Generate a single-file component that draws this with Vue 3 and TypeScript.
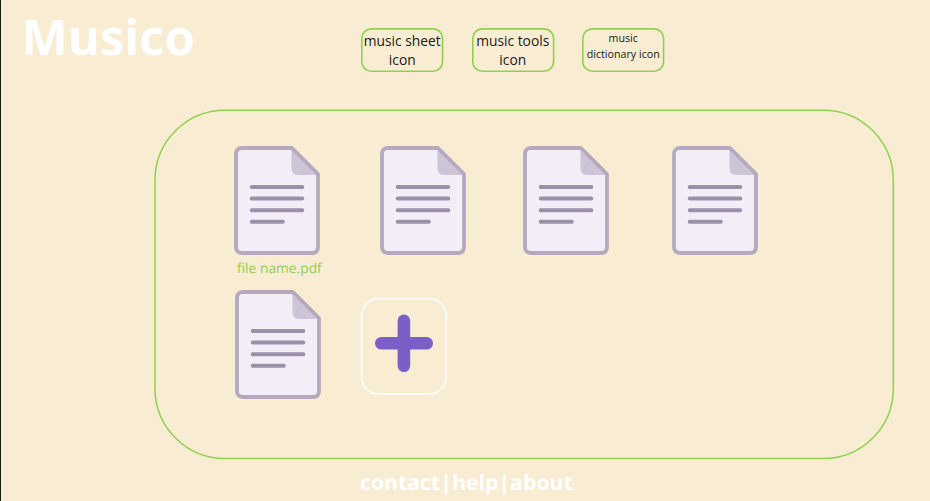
<script setup lang="ts">
interface NavItem {
  lines: string[]
  small?: boolean
}

interface SheetFile {
  slot: string
  name?: string
}

const navItems: NavItem[] = [
  { lines: ['music sheet', 'icon'] },
  { lines: ['music tools', 'icon'] },
  { lines: ['music', 'dictionary icon'], small: true },
]

const files: SheetFile[] = [
  { slot: 'first', name: 'file name.pdf' },
  { slot: 'second' },
  { slot: 'third' },
  { slot: 'fourth' },
  { slot: 'fifth' },
]
</script>

<template>
  <div class="page">
    <header class="header">
      <h1 class="brand">Musico</h1>
      <nav class="nav">
        <button v-for="item in navItems" :key="item.lines[1] + item.lines[0]" class="nav-item" :class="{ small: item.small }">
          <svg class="frame" viewBox="0 0 83 44" aria-hidden="true">
            <rect x="0.8" y="0.9" width="80.8" height="42.3" rx="9.5" fill="none" stroke="#8fd14f" stroke-width="1.6" />
          </svg>
          <span v-for="line in item.lines" :key="line" class="nav-line">{{ line }}</span>
        </button>
      </nav>
    </header>

    <main class="panel">
      <svg class="frame" viewBox="0 0 741 351" aria-hidden="true">
        <rect x="1" y="1.2" width="738.3" height="348.3" rx="70" fill="none" stroke="#8fd14f" stroke-width="1.5" />
      </svg>
      <div class="files">
        <figure v-for="file in files" :key="file.slot" class="file" :class="file.slot">
          <svg class="doc" width="86" height="109" viewBox="0 0 86 109" aria-hidden="true">
            <path d="M8 2H58L84 28V101Q84 107 78 107H8Q2 107 2 101V8Q2 2 8 2Z" fill="#f3edf8" />
            <path d="M57.5 2L84 29H64Q57.5 29 57.5 22.5Z" fill="#cdc4d6" />
            <path d="M8 2H58L84 28V101Q84 107 78 107H8Q2 107 2 101V8Q2 2 8 2Z" fill="none" stroke="#b4a9be" stroke-width="3.8" stroke-linejoin="round" />
            <path d="M17.7 41H68.3M17.7 52.6H68.3M17.7 64.2H68.3M17.7 75.8H48.8" fill="none" stroke="#9b8fa9" stroke-width="4" stroke-linecap="round" />
          </svg>
          <figcaption v-if="file.name" class="file-name">{{ file.name }}</figcaption>
        </figure>
        <button class="add" aria-label="Add file">
          <svg width="87" height="98" viewBox="0 0 87 98" aria-hidden="true">
            <rect x="1.6" y="1.6" width="84.6" height="95.4" rx="17" fill="none" stroke="#fff" stroke-width="1.6" />
            <path d="M43.9 23.7V68.7M21.3 46.2H66.7" stroke="#7b5fc7" stroke-width="12.6" stroke-linecap="round" />
          </svg>
        </button>
      </div>
    </main>

    <footer class="footer">contact|help|about</footer>
  </div>
</template>

<style>
body {
  margin: 0;
  background: #f8ecd2;
}
</style>

<style scoped>
.page {
  box-sizing: border-box;
  width: 930px;
  height: 501px;
  overflow: hidden;
  border-left: 1px solid #1a1a1a;
  background: #f8ecd2;
  font-family: "Open Sans", "Noto Sans", sans-serif;
  text-rendering: geometricPrecision;
}

.header {
  display: flex;
  height: 109px;
}

.brand {
  box-sizing: border-box;
  width: 360px;
  margin: 0;
  padding: 3px 0 0 20.5px;
  color: #fff;
  font-size: 49px;
  font-weight: 700;
  line-height: 68px;
}

.nav {
  display: flex;
  gap: 27.5px;
  padding-top: 28px;
}

button {
  padding: 0;
  border: 0;
  background: none;
  font: inherit;
}

.nav-item {
  position: relative;
  display: flex;
  flex-direction: column;
  align-items: center;
  box-sizing: border-box;
  width: 83px;
  height: 44px;
  padding: 3px 0.5px 0 0;
  color: #1a1a1a;
  font-size: 13.8px;
  line-height: 19px;
  white-space: nowrap;
}

.nav-item.small {
  font-size: 10.7px;
  line-height: 15.5px;
}

.frame {
  position: absolute;
  inset: 0;
  width: 100%;
  height: 100%;
}

.panel {
  position: relative;
  width: 741px;
  height: 351px;
  margin-left: 152.5px;
}

.files {
  display: grid;
  grid-template-columns: 146px 143px 149px 86px;
  grid-template-rows: 144px 110px;
  padding: 37px 0 0 80.5px;
}

.file {
  margin: 0;
}

.file.fifth {
  padding-left: 1px;
}

.doc,
.add svg {
  display: block;
}

.file-name {
  margin-top: 4px;
  padding-left: 3px;
  color: #8fd14f;
  font-size: 13.8px;
  line-height: 19px;
  white-space: nowrap;
}

.add {
  width: 87px;
  height: 98px;
  margin: 7px 0 0 -20px;
}

.footer {
  padding-left: 359px;
  color: #fff;
  font-size: 21.25px;
  font-weight: 700;
  line-height: 29px;
  margin-top: 8px;
}
</style>
